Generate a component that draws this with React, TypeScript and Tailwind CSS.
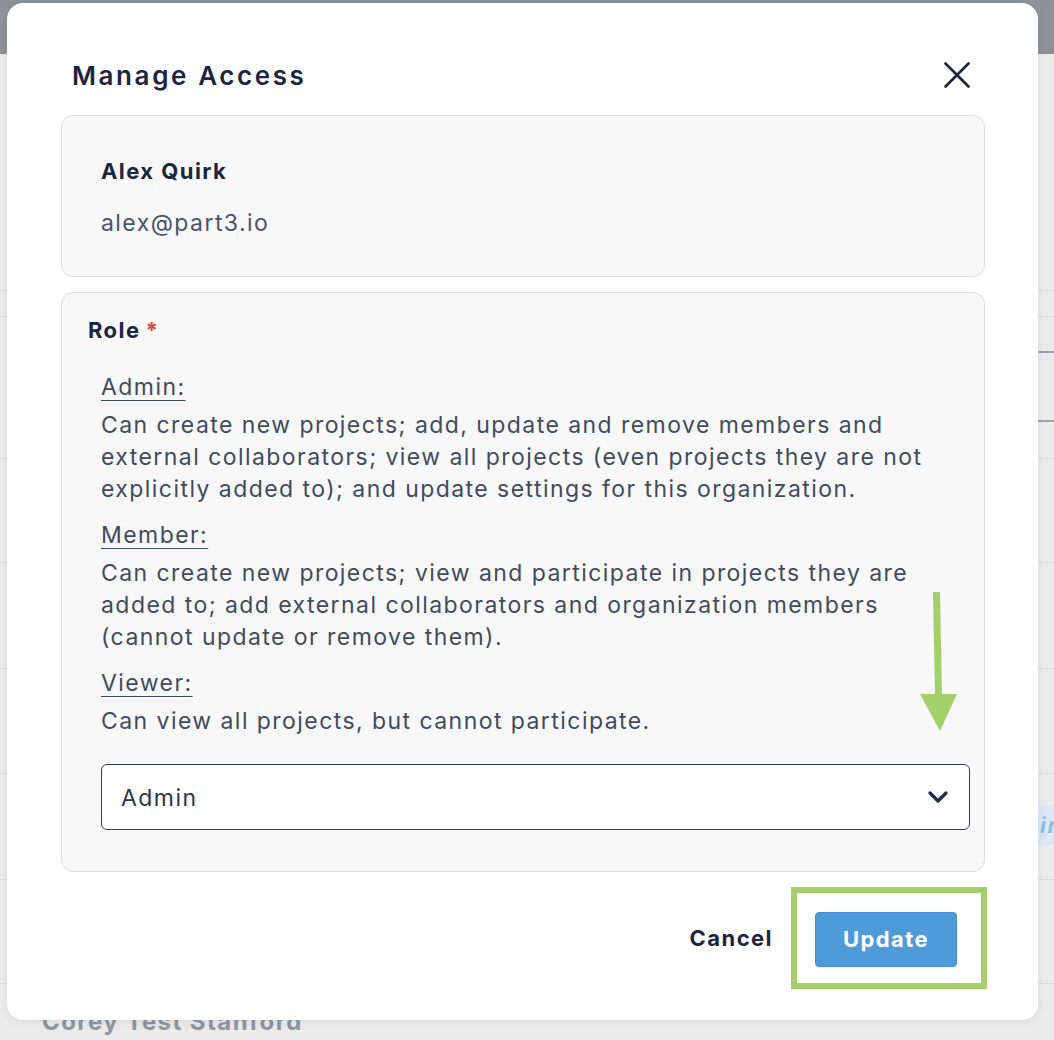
const roles = [
  {
    name: 'Admin:',
    text: 'Can create new projects; add, update and remove members and external collaborators; view all projects (even projects they are not explicitly added to); and update settings for this organization.',
  },
  {
    name: 'Member:',
    text: 'Can create new projects; view and participate in projects they are added to; add external collaborators and organization members (cannot update or remove them).',
  },
  {
    name: 'Viewer:',
    text: 'Can view all projects, but cannot participate.',
  },
];

// rows of the page behind the dialog
const rowLines = [290, 316, 458, 562, 668, 773, 879, 983];

function Backdrop() {
  return (
    <div className="absolute inset-0 flex flex-col bg-[#ebebeb]">
      <div className="h-[54px] shrink-0 bg-[#8c919a]" />
      <div className="relative flex-1">
        {rowLines.map((y) => (
          <div
            key={y}
            className="absolute left-0 right-0 h-px bg-[#d9d9d9]"
            style={{ top: y - 54 }}
          />
        ))}
        <div className="absolute right-0 top-[297px] h-[2px] w-[16px] bg-[#9aa4b4]" />
        <div className="absolute right-0 top-[366px] h-[2px] w-[16px] bg-[#9aa4b4]" />
        <div className="absolute right-0 top-[751px] flex h-[40px] w-[16px] items-center overflow-hidden bg-[#dbe8f3] pl-[2px] text-[22px] font-bold italic text-[#8fbfe4]">
          ir
        </div>
        <div className="absolute left-[42px] top-[950px] text-[24px] font-bold tracking-[0.06em] text-[#8e96a3]">
          Corey Test Stanford
        </div>
      </div>
    </div>
  );
}

function CloseIcon() {
  return (
    <svg width="26" height="26" viewBox="0 0 26 26" fill="none" stroke="currentColor" strokeWidth="2.6" strokeLinecap="round">
      <path d="M1.5 1.5 L24.5 24.5 M24.5 1.5 L1.5 24.5" />
    </svg>
  );
}

function Chevron() {
  return (
    <svg width="20" height="12" viewBox="0 0 20 12" fill="none" stroke="currentColor" strokeWidth="3.2" strokeLinecap="round" strokeLinejoin="round">
      <path d="M2 2 L10 10 L18 2" />
    </svg>
  );
}

export default function App() {
  return (
    <div className="relative h-[1040px] w-[1054px] overflow-hidden font-['Inter',sans-serif] tracking-[0.09em]">
      <Backdrop />

      <div className="absolute left-[7px] top-[3px] flex h-[1017px] w-[1031px] flex-col rounded-[16px] bg-white pl-[54px] pr-[53px] pt-[52px] shadow-[0_2px_10px_rgba(0,0,0,0.08)]">
        {/* Header */}
        <div className="flex h-[40px] items-center justify-between">
          <h2 className="pl-[11px] text-[26px] font-semibold tracking-[0.1em] text-[#1b2540]">Manage Access</h2>
          <button className="mr-[15px] text-[#1b2540]">
            <CloseIcon />
          </button>
        </div>

        {/* User card */}
        <div className="mt-[20px] flex flex-col rounded-[12px] border border-[#dcdcdc] bg-[#f8f8f8] pb-[37px] pl-[39px] pt-[39px]">
          <div className="text-[22px] font-bold leading-[32px] text-[#1b2540]">Alex Quirk</div>
          <div className="mt-[20px] text-[23px] leading-[32px] text-[#46536a]">alex@part3.io</div>
        </div>

        {/* Role card */}
        <div className="mt-[15px] flex flex-col rounded-[12px] border border-[#dcdcdc] bg-[#f8f8f8] pb-[41px] pl-[26px] pr-[14px] pt-[21px]">
          <div className="flex items-start text-[22px] font-bold leading-[32px] text-[#1b2540]">
            Role
            <span className="ml-[5px] text-[#d9483b]">*</span>
          </div>
          <div className="mt-[25px] flex flex-col gap-[14px] pl-[13px] pr-[30px]">
            {roles.map((r) => (
              <div key={r.name} className="flex flex-col gap-[6px]">
                <div className="text-[23px] leading-[32px] text-[#3f4b5e] underline decoration-1 underline-offset-[5px]">
                  {r.name}
                </div>
                <p className="text-[23px] leading-[32px] text-[#3f4b5e]">{r.text}</p>
              </div>
            ))}
          </div>
          <div className="ml-[13px] mt-[27px] flex h-[66px] items-center justify-between rounded-[6px] border-[1.5px] border-[#2c3e66] bg-white pl-[19px] pr-[21px]">
            <span className="pt-[2px] text-[23px] text-[#2a3650]">Admin</span>
            <span className="text-[#1b2c52]">
              <Chevron />
            </span>
          </div>
        </div>

        {/* Footer */}
        <div className="mr-[-2px] mt-[15px] flex items-center justify-end gap-[18px]">
          <button className="text-[22px] font-bold text-[#1b2540]">Cancel</button>
          <div className="border-[6px] border-[#a3d06b] pb-[16px] pl-[18px] pr-[24px] pt-[19px]">
            <button className="flex h-[55px] w-[142px] items-center justify-center rounded-[4px] border border-[#3f8fd2] bg-[#4f9bd9] text-[22px] font-bold text-white">
              Update
            </button>
          </div>
        </div>
      </div>

      {/* annotation arrow */}
      <svg className="absolute left-[915px] top-[588px]" width="50" height="150" viewBox="915 588 50 150">
        <path d="M933 592 L940 592 L942 696 L935 696 Z" fill="#a3d06b" />
        <path d="M920 694 L957 694 L940 731 Z" fill="#a3d06b" />
      </svg>
    </div>
  );
}
